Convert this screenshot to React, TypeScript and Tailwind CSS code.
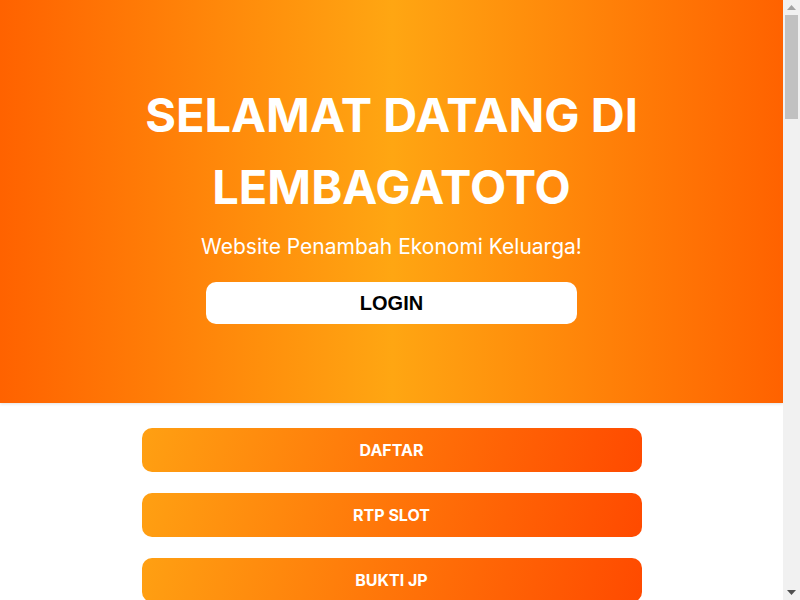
const links = ["DAFTAR", "RTP SLOT", "BUKTI JP"];

function Scrollbar() {
  return (
    <div className="flex w-[17px] shrink-0 flex-col bg-[#f1f1f1]">
      <div className="flex h-[15px] items-center justify-center">
        <svg width="9" height="5" viewBox="0 0 9 5">
          <path d="M4.5 0L9 5H0z" fill="#a3a3a3" />
        </svg>
      </div>
      <div className="mx-[2px] h-[104px] bg-[#c1c1c1]" />
      <div className="flex-1" />
      <div className="flex h-[15px] items-center justify-center">
        <svg width="9" height="5" viewBox="0 0 9 5">
          <path d="M0 0H9L4.5 5z" fill="#505050" />
        </svg>
      </div>
    </div>
  );
}

export default function App() {
  return (
    <div className="flex h-screen overflow-hidden bg-white font-['Inter','Noto_Sans',sans-serif]">
      <div className="min-w-0 flex-1">
        <header className="bg-[linear-gradient(to_right,#ff6200,#ffa612_50%,#ff6200)] px-5 pt-[79px] pb-[79px] text-center text-white shadow-[0_1px_3px_rgba(0,0,0,0.12)]">
          <h1 className="mx-auto max-w-[530px] text-[47px] font-bold leading-[72px]">
            SELAMAT DATANG DI LEMBAGATOTO
          </h1>
          <p className="mt-[9px] text-[21px] leading-[30px]">
            Website Penambah Ekonomi Keluarga!
          </p>
          <a
            href="#"
            className="mx-auto mt-5 flex h-[42px] w-[371px] items-center justify-center rounded-[10px] bg-white font-['Liberation_Sans',Arial,sans-serif] text-[20px] font-bold text-black"
          >
            LOGIN
          </a>
        </header>

        <main className="mx-auto flex max-w-[500px] flex-col gap-[21px] pt-[25px]">
          {links.map((label) => (
            <a
              key={label}
              href="#"
              className="flex h-[44px] items-center justify-center rounded-[10px] bg-[linear-gradient(105deg,#ffa012,#ff4a00)] text-[16px] font-bold text-white"
            >
              {label}
            </a>
          ))}
        </main>
      </div>
      <Scrollbar />
    </div>
  );
}
